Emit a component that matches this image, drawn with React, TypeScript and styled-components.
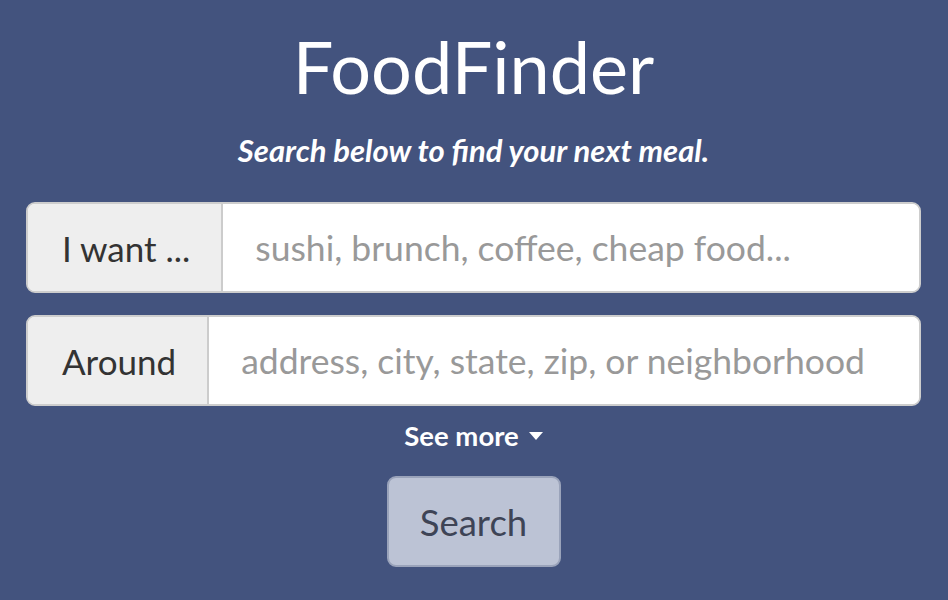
import styled, { createGlobalStyle } from "styled-components";

const GlobalStyle = createGlobalStyle`
  html, body {
    margin: 0;
    padding: 0;
    background: #43537e;
    font-family: Lato, "Open Sans", sans-serif;
  }
`;

const Page = styled.div`
  height: 600px;
  padding: 0 27px 0 26px;
  display: flex;
  flex-direction: column;
  align-items: center;
  overflow: hidden;
`;

const Title = styled.h1`
  margin: 23px 0 0;
  font-size: 72px;
  font-weight: 400;
  line-height: 86px;
  color: #fff;
`;

const Tagline = styled.p`
  margin: 23px 0 0;
  font-size: 31px;
  font-weight: 700;
  font-style: italic;
  line-height: 36px;
  color: #fff;
`;

const Form = styled.form`
  width: 100%;
  margin-top: 34px;
  display: flex;
  flex-direction: column;
  align-items: center;
  gap: 22px;
`;

const InputGroup = styled.div`
  width: 100%;
  height: 91px;
  box-sizing: border-box;
  display: flex;
  border: 2px solid #cdcdcd;
  border-radius: 9px;
  overflow: hidden;
  background: #fff;
`;

const Addon = styled.span`
  display: flex;
  align-items: center;
  padding: 0 31px 0 34px;
  background: #eeeeee;
  border-right: 2px solid #cccccc;
  color: #333;
  font-size: 35px;
`;

const Field = styled.input`
  flex: 1;
  min-width: 0;
  border: none;
  outline: none;
  padding: 0 0 0 32px;
  font-family: Lato, "Open Sans", sans-serif;
  font-size: 35.5px;
  color: #555;
  background: #fff;

  &::placeholder {
    color: #999;
  }
`;

const SeeMore = styled.button`
  margin-top: -8px;
  background: none;
  border: none;
  padding: 0;
  display: flex;
  align-items: center;
  gap: 10px;
  color: #fff;
  font-family: Lato, "Open Sans", sans-serif;
  font-size: 27.5px;
  font-weight: 700;
  line-height: 32px;
  cursor: pointer;
`;

const Caret = styled.span`
  width: 0;
  height: 0;
  border-left: 7.5px solid transparent;
  border-right: 7.5px solid transparent;
  border-top: 8px solid #fff;
`;

const SearchButton = styled.button`
  margin-top: 2px;
  width: 174px;
  height: 91px;
  box-sizing: border-box;
  background: #bcc3d5;
  border: 2px solid #9aa3ba;
  border-radius: 9px;
  color: #3e4456;
  font-family: Lato, "Open Sans", sans-serif;
  font-size: 36.5px;
  cursor: pointer;
`;

export default function App() {
  return (
    <Page>
      <GlobalStyle />
      <Title>FoodFinder</Title>
      <Tagline>Search below to find your next meal.</Tagline>
      <Form onSubmit={(e) => e.preventDefault()}>
        <InputGroup>
          <Addon>I want ...</Addon>
          <Field placeholder="sushi, brunch, coffee, cheap food..." />
        </InputGroup>
        <InputGroup>
          <Addon>Around</Addon>
          <Field placeholder="address, city, state, zip, or neighborhood" />
        </InputGroup>
        <SeeMore type="button">
          See more <Caret />
        </SeeMore>
        <SearchButton type="submit">Search</SearchButton>
      </Form>
    </Page>
  );
}
